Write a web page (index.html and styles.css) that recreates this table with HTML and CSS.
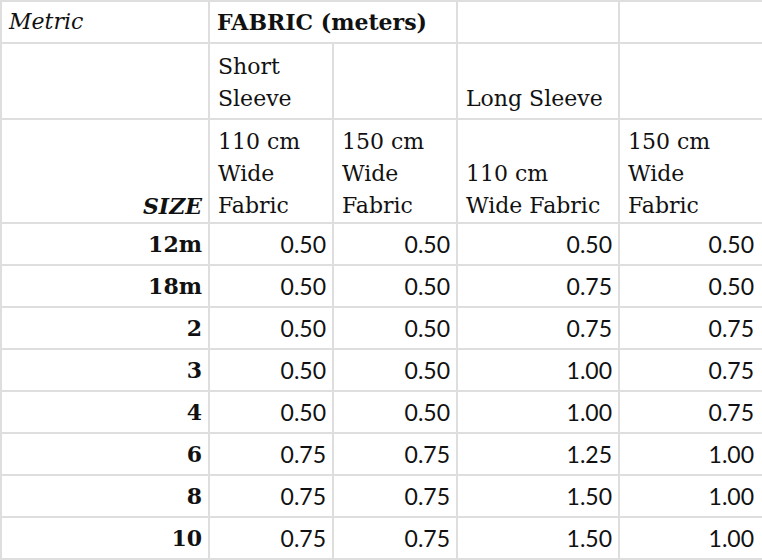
FILE: index.html
```html
<!DOCTYPE html>
<html>
<head>
<meta charset="utf-8">
<link rel="stylesheet" href="styles.css">
</head>
<body>
<table class="chart">
  <colgroup>
    <col class="c-size">
    <col class="c-narrow">
    <col class="c-narrow">
    <col class="c-wide">
    <col class="c-last">
  </colgroup>
  <tr class="r-title">
    <td class="label italic">Metric</td>
    <td class="label bold" colspan="2">FABRIC (meters)</td>
    <td></td>
    <td></td>
  </tr>
  <tr class="r-sleeve">
    <td></td>
    <td class="label">Short<br>Sleeve</td>
    <td></td>
    <td class="label">Long Sleeve</td>
    <td></td>
  </tr>
  <tr class="r-width">
    <td class="label size">SIZE</td>
    <td class="label">110 cm<br>Wide<br>Fabric</td>
    <td class="label">150 cm<br>Wide<br>Fabric</td>
    <td class="label">110 cm<br>Wide Fabric</td>
    <td class="label">150 cm<br>Wide<br>Fabric</td>
  </tr>
  <tr class="r-data"><th>12m</th><td>0.50</td><td>0.50</td><td>0.50</td><td>0.50</td></tr>
  <tr class="r-data"><th>18m</th><td>0.50</td><td>0.50</td><td>0.75</td><td>0.50</td></tr>
  <tr class="r-data"><th>2</th><td>0.50</td><td>0.50</td><td>0.75</td><td>0.75</td></tr>
  <tr class="r-data"><th>3</th><td>0.50</td><td>0.50</td><td>1.00</td><td>0.75</td></tr>
  <tr class="r-data"><th>4</th><td>0.50</td><td>0.50</td><td>1.00</td><td>0.75</td></tr>
  <tr class="r-data"><th>6</th><td>0.75</td><td>0.75</td><td>1.25</td><td>1.00</td></tr>
  <tr class="r-data"><th>8</th><td>0.75</td><td>0.75</td><td>1.50</td><td>1.00</td></tr>
  <tr class="r-data"><th>10</th><td>0.75</td><td>0.75</td><td>1.50</td><td>1.00</td></tr>
</table>
</body>
</html>
```

FILE: styles.css
```css
html, body {
  margin: 0;
  padding: 0;
  background: #fff;
  overflow: hidden;
}

.chart {
  border-collapse: collapse;
  table-layout: fixed;
  width: 764px;
  color: #111;
  font-family: "DejaVu Serif", "Liberation Serif", serif;
  font-size: 22px;
  line-height: 32px;
}

.c-size { width: 208px; }
.c-narrow { width: 124px; }
.c-wide { width: 162px; }
.c-last { width: 146px; }

.chart td,
.chart th {
  border: 2px solid #dedede;
  padding: 0 6px 0 8px;
  vertical-align: bottom;
  white-space: nowrap;
}

.chart td:last-child { padding-right: 10px; }

.r-title { height: 42px; }
.r-title td { vertical-align: middle; padding-left: 7px; }
.r-sleeve { height: 76px; }
.r-sleeve td { padding-bottom: 3px; }
.r-width { height: 104px; }
.r-width td { padding-bottom: 0; }

.label { text-align: left; font-weight: normal; }
.italic { font-style: italic; }
.bold { font-weight: bold; }
.size {
  text-align: right;
  font-weight: bold;
  font-style: italic;
}

.r-data { height: 42px; }
.r-data th {
  text-align: right;
  font-weight: bold;
  vertical-align: middle;
}
.r-data td {
  text-align: right;
  vertical-align: middle;
  font-family: Lato, "Open Sans", sans-serif;
  font-size: 23px;
}
```
